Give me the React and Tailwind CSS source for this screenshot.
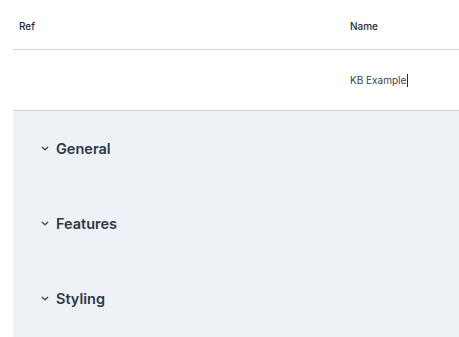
const sections = ["General", "Features", "Styling"];

const Chevron = () => (
  <svg width="8" height="5" viewBox="0 0 8 5" fill="none" className="shrink-0">
    <path d="M1.2 1.2l2.8 2.6 2.8-2.6" stroke="#374151" strokeWidth="1.2" strokeLinecap="round" strokeLinejoin="round" />
  </svg>
);

export default function App() {
  return (
    <div className="w-[459px] h-[337px] overflow-hidden bg-white font-['Inter',sans-serif]">
      <div className="ml-[13px]">
        {/* Header */}
        <div className="flex h-[50px] items-center pt-[3px] border-b border-[#cbd5e1] text-[10px] font-medium text-[#1e293b]">
          <div className="w-[337px] pl-[6px]">Ref</div>
          <div>Name</div>
        </div>
        {/* Row */}
        <div className="flex h-[61px] items-center border-b border-[#c9d6e6] text-[10px] text-[#374151]">
          <div className="w-[337px]"></div>
          <div className="flex items-center">
            KB Example
            <span className="ml-[1px] inline-block h-[13px] w-px bg-[#1e293b]"></span>
          </div>
        </div>
        {/* Panel */}
        <div className="h-[226px] bg-[#eef2f6]">
          {sections.map((s) => (
            <div key={s} className="flex h-[75px] items-center gap-[7px] pl-[28px]">
              <Chevron />
              <span className="text-[14.5px] font-semibold text-[#2d3748]">{s}</span>
            </div>
          ))}
        </div>
      </div>
    </div>
  );
}
